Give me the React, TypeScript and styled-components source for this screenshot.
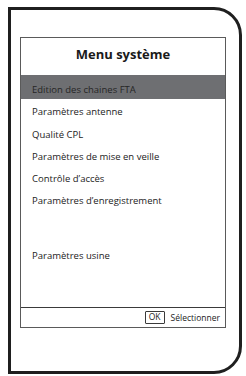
import React from "react";
import styled, { createGlobalStyle } from "styled-components";

const Global = createGlobalStyle`
  html, body { margin: 0; padding: 0; background: #ffffff; }
  body { font-family: "Open Sans", "Noto Sans", sans-serif; color: #222222; }
`;

const Frame = styled.div`
  box-sizing: border-box;
  margin: 7px 0 0 8px;
  width: 234px;
  height: 367px;
  border: 3px solid #1f1f1f;
  border-radius: 0 28px 28px 0;
  padding: 27px 0 0 9px;
`;

const Panel = styled.div`
  box-sizing: border-box;
  width: 206px;
  height: 291px;
  border: 1px solid #5a5a5a;
  display: flex;
  flex-direction: column;
`;

const Title = styled.div`
  height: 37px;
  box-sizing: border-box;
  padding-top: 6px;
  text-align: center;
  font-weight: 700;
  font-size: 13px;
  line-height: 20px;
  color: #1a1a1a;
`;

const List = styled.div`
  display: flex;
  flex-direction: column;
  flex: 1;
`;

const Row = styled.div<{ $active?: boolean; $gap?: number }>`
  box-sizing: border-box;
  height: ${(p) => (p.$active ? "24px" : "22.3px")};
  padding: ${(p) => (p.$active ? "6px" : "4.3px")} 0 0 11px;
  margin-top: ${(p) => p.$gap ?? 0}px;
  font-size: 9.5px;
  line-height: 18px;
  white-space: nowrap;
  background: ${(p) => (p.$active ? "#6e6f72" : "transparent")};
  color: ${(p) => (p.$active ? "#262626" : "#222222")};
`;

const Footer = styled.div`
  height: 20px;
  box-sizing: border-box;
  border-top: 1px solid #3a3a3a;
  display: flex;
  align-items: center;
  justify-content: flex-end;
  gap: 6px;
  padding: 0 5px 0 0;
  font-size: 8.5px;
  color: #222222;
`;

const Key = styled.span`
  box-sizing: border-box;
  width: 20px;
  height: 13px;
  border: 1px solid #3a3a3a;
  border-radius: 1px;
  display: inline-flex;
  align-items: center;
  justify-content: center;
  font-size: 8.5px;
  line-height: 1;
`;

const items = [
  "Paramètres antenne",
  "Qualité CPL",
  "Paramètres de mise en veille",
  "Contrôle d’accès",
  "Paramètres d’enregistrement",
];

export default function App() {
  return (
    <>
      <Global />
      <Frame>
        <Panel>
          <Title>Menu système</Title>
          <List>
            <Row $active>Edition des chaines FTA</Row>
            {items.map((t) => (
              <Row key={t}>{t}</Row>
            ))}
            <Row $gap={32.2}>Paramètres usine</Row>
          </List>
          <Footer>
            <Key>OK</Key>
            <span>Sélectionner</span>
          </Footer>
        </Panel>
      </Frame>
    </>
  );
}
